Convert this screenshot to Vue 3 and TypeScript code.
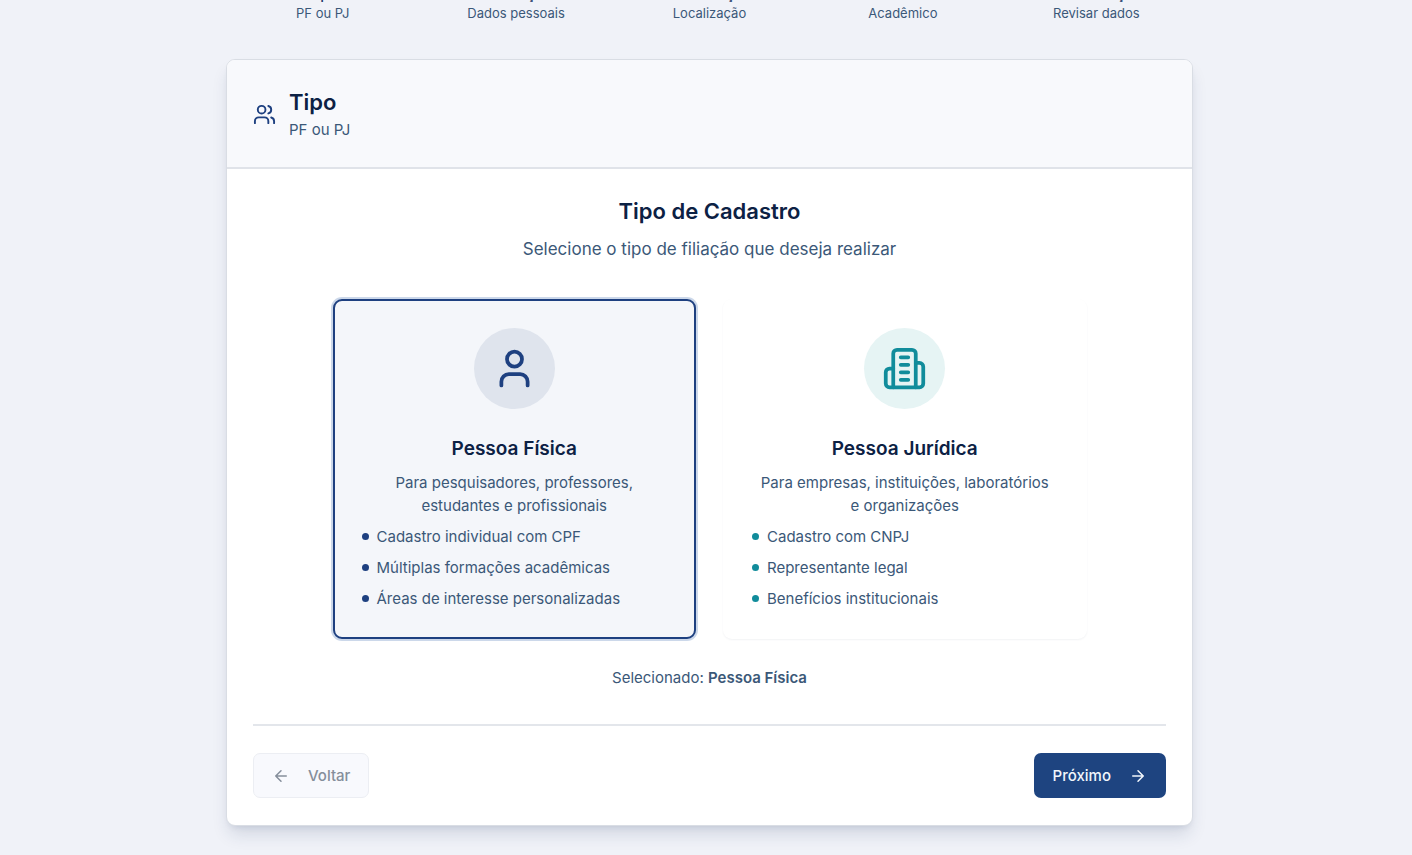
<script setup lang="ts">
import { computed, ref } from 'vue'

interface Step {
  title: string
  hint: string
}

interface Option {
  id: string
  title: string
  description: string
  features: string[]
}

const steps: Step[] = [
  { title: 'Tipo', hint: 'PF ou PJ' },
  { title: 'Informações', hint: 'Dados pessoais' },
  { title: 'Endereço', hint: 'Localização' },
  { title: 'Perfil', hint: 'Acadêmico' },
  { title: 'Confirmação', hint: 'Revisar dados' },
]

const options: Option[] = [
  {
    id: 'pf',
    title: 'Pessoa Física',
    description: 'Para pesquisadores, professores, estudantes e profissionais',
    features: [
      'Cadastro individual com CPF',
      'Múltiplas formações acadêmicas',
      'Áreas de interesse personalizadas',
    ],
  },
  {
    id: 'pj',
    title: 'Pessoa Jurídica',
    description: 'Para empresas, instituições, laboratórios e organizações',
    features: ['Cadastro com CNPJ', 'Representante legal', 'Benefícios institucionais'],
  },
]

const selected = ref('pf')
const selectedTitle = computed(() => options.find((o) => o.id === selected.value)?.title ?? '')
</script>

<template>
  <main class="page">
    <div class="container">
      <ol class="steps">
        <li v-for="step in steps" :key="step.title">
          <span class="step-title">{{ step.title }}</span>
          <span class="step-hint">{{ step.hint }}</span>
        </li>
      </ol>

      <section class="card">
        <header class="card-header">
          <svg class="header-icon" viewBox="0 0 24 24" aria-hidden="true">
            <path d="M16 21v-2a4 4 0 0 0-4-4H6a4 4 0 0 0-4 4v2" />
            <circle cx="9" cy="7" r="4" />
            <path d="M22 21v-2a4 4 0 0 0-3-3.87" />
            <path d="M16 3.13a4 4 0 0 1 0 7.75" />
          </svg>
          <div>
            <h1 class="card-title">Tipo</h1>
            <p>PF ou PJ</p>
          </div>
        </header>

        <form class="card-body" @submit.prevent>
          <h2 class="form-title">Tipo de Cadastro</h2>
          <p class="form-lead">Selecione o tipo de filiação que deseja realizar</p>

          <div class="options" role="radiogroup" aria-label="Tipo de Cadastro">
            <label
              v-for="option in options"
              :key="option.id"
              class="option"
              :class="[option.id, { active: selected === option.id }]"
              :for="option.id"
            >
              <input :id="option.id" v-model="selected" class="radio" type="radio" name="tipo" :value="option.id" />
              <span class="badge">
                <svg v-if="option.id === 'pf'" viewBox="0 0 24 24" aria-hidden="true">
                  <path d="M19 21v-2a4 4 0 0 0-4-4H9a4 4 0 0 0-4 4v2" />
                  <circle cx="12" cy="7" r="4" />
                </svg>
                <svg v-else viewBox="0 0 24 24" aria-hidden="true">
                  <path d="M6 22V4a2 2 0 0 1 2-2h8a2 2 0 0 1 2 2v18Z" />
                  <path d="M6 12H4a2 2 0 0 0-2 2v6a2 2 0 0 0 2 2h2" />
                  <path d="M18 9h2a2 2 0 0 1 2 2v9a2 2 0 0 1-2 2h-2" />
                  <path d="M10 6h4M10 10h4M10 14h4M10 18h4" />
                </svg>
              </span>
              <span class="option-title">{{ option.title }}</span>
              <span class="option-text">{{ option.description }}</span>
              <span class="features">
                <span v-for="feature in option.features" :key="feature" class="feature">{{ feature }}</span>
              </span>
            </label>
          </div>

          <p class="summary">Selecionado: <strong>{{ selectedTitle }}</strong></p>

          <footer class="actions">
            <button class="button back" type="button" disabled>
              <svg class="arrow" viewBox="0 0 24 24" aria-hidden="true"><path d="m12 19-7-7 7-7M19 12H5" /></svg>
              Voltar
            </button>
            <button class="button next" type="submit">
              Próximo
              <svg class="arrow" viewBox="0 0 24 24" aria-hidden="true"><path d="M5 12h14M12 5l7 7-7 7" /></svg>
            </button>
          </footer>
        </form>
      </section>
    </div>
  </main>
</template>

<style>
body {
  background: #f0f2f8;
}
</style>

<style scoped>
* {
  box-sizing: border-box;
}
.page {
  padding: 0 16px 30px 23px;
  color: #3b5878;
  font-family: Inter, 'Liberation Sans', sans-serif;
  font-size: 15px;
  line-height: 23px;
}
.container {
  max-width: 967px;
  margin: 0 auto;
}
h1,
h2,
p,
ol {
  margin: 0;
  padding: 0;
}
svg {
  display: block;
  fill: none;
  stroke: currentColor;
  stroke-width: 2;
  stroke-linecap: round;
  stroke-linejoin: round;
}
/* The titles of the steps run past the top edge of the page. */
.steps {
  display: grid;
  grid-template-columns: repeat(5, 1fr);
  margin-top: -16px;
  list-style: none;
  text-align: center;
}
.step-title,
.step-hint {
  display: block;
}
.step-title {
  color: #1f3a68;
  font-weight: 500;
  line-height: 20px;
}
.step-hint {
  font-size: 13px;
  line-height: 18px;
}
.card {
  margin-top: 37px;
  border: 1px solid #d9dde4;
  border-radius: 9px;
  background: #fff;
  box-shadow: 0 11px 17px -3px rgb(30 50 90 / 14%), 0 4px 7px -4px rgb(30 50 90 / 14%);
  overflow: hidden;
}
.card-header {
  display: flex;
  align-items: center;
  gap: 13px;
  padding: 27px 26px 26px;
  border-bottom: 2px solid #e0e3e9;
  background: #f8f9fc;
}
.header-icon {
  width: 23px;
  height: 23px;
  color: #1e4080;
}
.card-title,
.form-title,
.option-title {
  color: #0c2144;
  font-weight: 600;
}
.card-title,
.form-title {
  font-size: 22px;
  line-height: 31px;
}
.card-body {
  padding: 27px 26px;
  text-align: center;
}
.form-lead {
  margin-top: 8px;
  font-size: 17px;
  line-height: 29px;
}
.options {
  display: grid;
  grid-template-columns: 1fr 1fr;
  gap: 27px;
  max-width: 754px;
  margin: 35px auto 0;
}
.option {
  position: relative;
  display: flex;
  flex-direction: column;
  align-items: center;
  padding: 27px;
  border: 2px solid transparent;
  border-radius: 9px;
  background: #fff;
  box-shadow: 0 1px 2px rgb(30 50 90 / 6%);
  cursor: pointer;
}
.option.active {
  border-color: #1e4080;
  background: #f4f6fa;
  box-shadow: 0 0 0 2px #ccd8ea;
}
.radio {
  position: absolute;
  opacity: 0;
}
.badge {
  display: grid;
  place-items: center;
  width: 81px;
  height: 81px;
  border-radius: 50%;
}
.badge svg {
  width: 45px;
  height: 45px;
}
.pf .badge {
  background: #dfe4ed;
  color: #1e4080;
}
.pj .badge {
  background: #e6f4f4;
  color: #118c9b;
}
.option-title {
  margin-top: 24px;
  font-size: 19px;
  line-height: 31px;
}
.option-text {
  max-width: 300px;
  margin-top: 7px;
}
.features {
  display: flex;
  flex-direction: column;
  gap: 8px;
  align-self: stretch;
  margin-top: 8px;
  text-align: left;
}
.feature {
  display: flex;
  align-items: center;
  gap: 8px;
}
.feature::before {
  width: 7px;
  height: 7px;
  border-radius: 50%;
  background: #1e4080;
  content: '';
}
.pj .feature::before {
  background: #118c9b;
}
.summary {
  margin-top: 27px;
}
.summary strong {
  font-weight: 600;
}
.actions {
  display: flex;
  justify-content: space-between;
  margin-top: 35px;
  padding-top: 27px;
  border-top: 2px solid #e3e6eb;
}
.button {
  display: flex;
  align-items: center;
  gap: 18px;
  height: 45px;
  padding: 0 18px;
  border: 1px solid transparent;
  border-radius: 7px;
  font: inherit;
  font-weight: 500;
}
.arrow {
  width: 18px;
  height: 18px;
}
.back {
  border-color: #eceef3;
  background: #f8f9fd;
  color: #858e9b;
}
.next {
  background: #1e4480;
  color: #f1f6fb;
}
</style>
